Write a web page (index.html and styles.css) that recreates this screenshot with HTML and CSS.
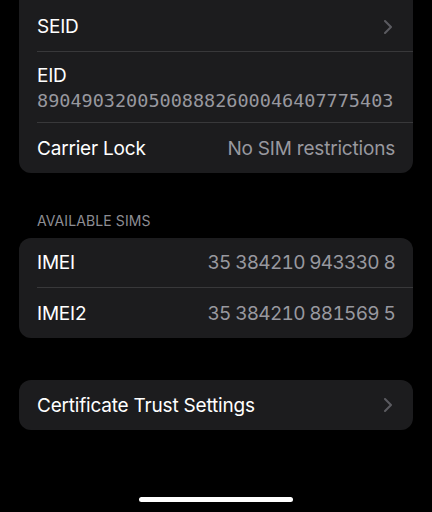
FILE: index.html
```html
<!doctype html>
<html lang="en">
  <head>
    <meta charset="UTF-8" />
    <title>About</title>
    <link rel="stylesheet" href="styles.css">
  </head>
  <body>
    <div class="screen">
      <div class="group cut">
        <div class="row">
          <div class="cell">
            <span class="label">SEID</span>
            <svg class="chevron" viewBox="0 0 8 14"><path d="M1 1l6 6-6 6" /></svg>
          </div>
        </div>
        <div class="row">
          <div class="cell stack">
            <span class="label">EID</span>
            <span class="digits">89049032005008882600046407775403</span>
          </div>
        </div>
        <div class="row">
          <div class="cell">
            <span class="label">Carrier Lock</span>
            <span class="value">No SIM restrictions</span>
          </div>
        </div>
      </div>

      <div class="section-title">AVAILABLE SIMS</div>
      <div class="group">
        <div class="row">
          <div class="cell">
            <span class="label">IMEI</span>
            <span class="value num">35 384210 943330 8</span>
          </div>
        </div>
        <div class="row">
          <div class="cell">
            <span class="label">IMEI2</span>
            <span class="value num">35 384210 881569 5</span>
          </div>
        </div>
      </div>

      <div class="group spaced">
        <div class="row">
          <div class="cell">
            <span class="label">Certificate Trust Settings</span>
            <svg class="chevron" viewBox="0 0 8 14"><path d="M1 1l6 6-6 6" /></svg>
          </div>
        </div>
      </div>

      <div class="home-bar"></div>
    </div>
  </body>
</html>
```
FILE: styles.css
```css
body {
  margin: 0;
  background-color: #000;
  font-family: Inter, "Noto Sans", sans-serif;
  color: #fff;
}

.screen {
  height: 512px;
  padding: 0 19px;
  display: flex;
  flex-direction: column;
  box-sizing: border-box;
  overflow: hidden;
}

.group {
  background-color: #1c1c1e;
  border-radius: 12px;
  overflow: hidden;
}

.group.cut {
  border-top-left-radius: 0;
  border-top-right-radius: 0;
  padding-top: 2px;
}

.group.spaced {
  margin-top: 42px;
}

.row {
  padding-left: 18px;
}

.cell {
  display: flex;
  justify-content: space-between;
  align-items: center;
  height: 49px;
  padding-right: 18px;
  border-bottom: 1px solid #38383a;
}

.row:last-child .cell {
  border-bottom: none;
  height: 50px;
}

.cell.stack {
  flex-direction: column;
  align-items: flex-start;
  justify-content: center;
  height: 70px;
}

.label {
  font-size: 19px;
  letter-spacing: -0.2px;
}

.value {
  font-size: 19px;
  color: #98989f;
  letter-spacing: -0.2px;
}

.num {
  font-variant-numeric: tabular-nums;
  letter-spacing: -0.7px;
}

.digits {
  font-family: "DejaVu Sans Mono", monospace;
  font-size: 18.5px;
  color: #98989f;
  margin-top: 3px;
}

.chevron {
  width: 8px;
  height: 14px;
  margin-right: 3px;
  fill: none;
  stroke: #5b5b60;
  stroke-width: 2;
  stroke-linecap: round;
  stroke-linejoin: round;
}

.section-title {
  margin: 39px 0 9px 18px;
  font-size: 14px;
  color: #8d8d93;
  letter-spacing: 0.1px;
}

.home-bar {
  width: 154px;
  height: 5px;
  border-radius: 3px;
  background-color: #fff;
  margin: auto auto 10px;
}
```
